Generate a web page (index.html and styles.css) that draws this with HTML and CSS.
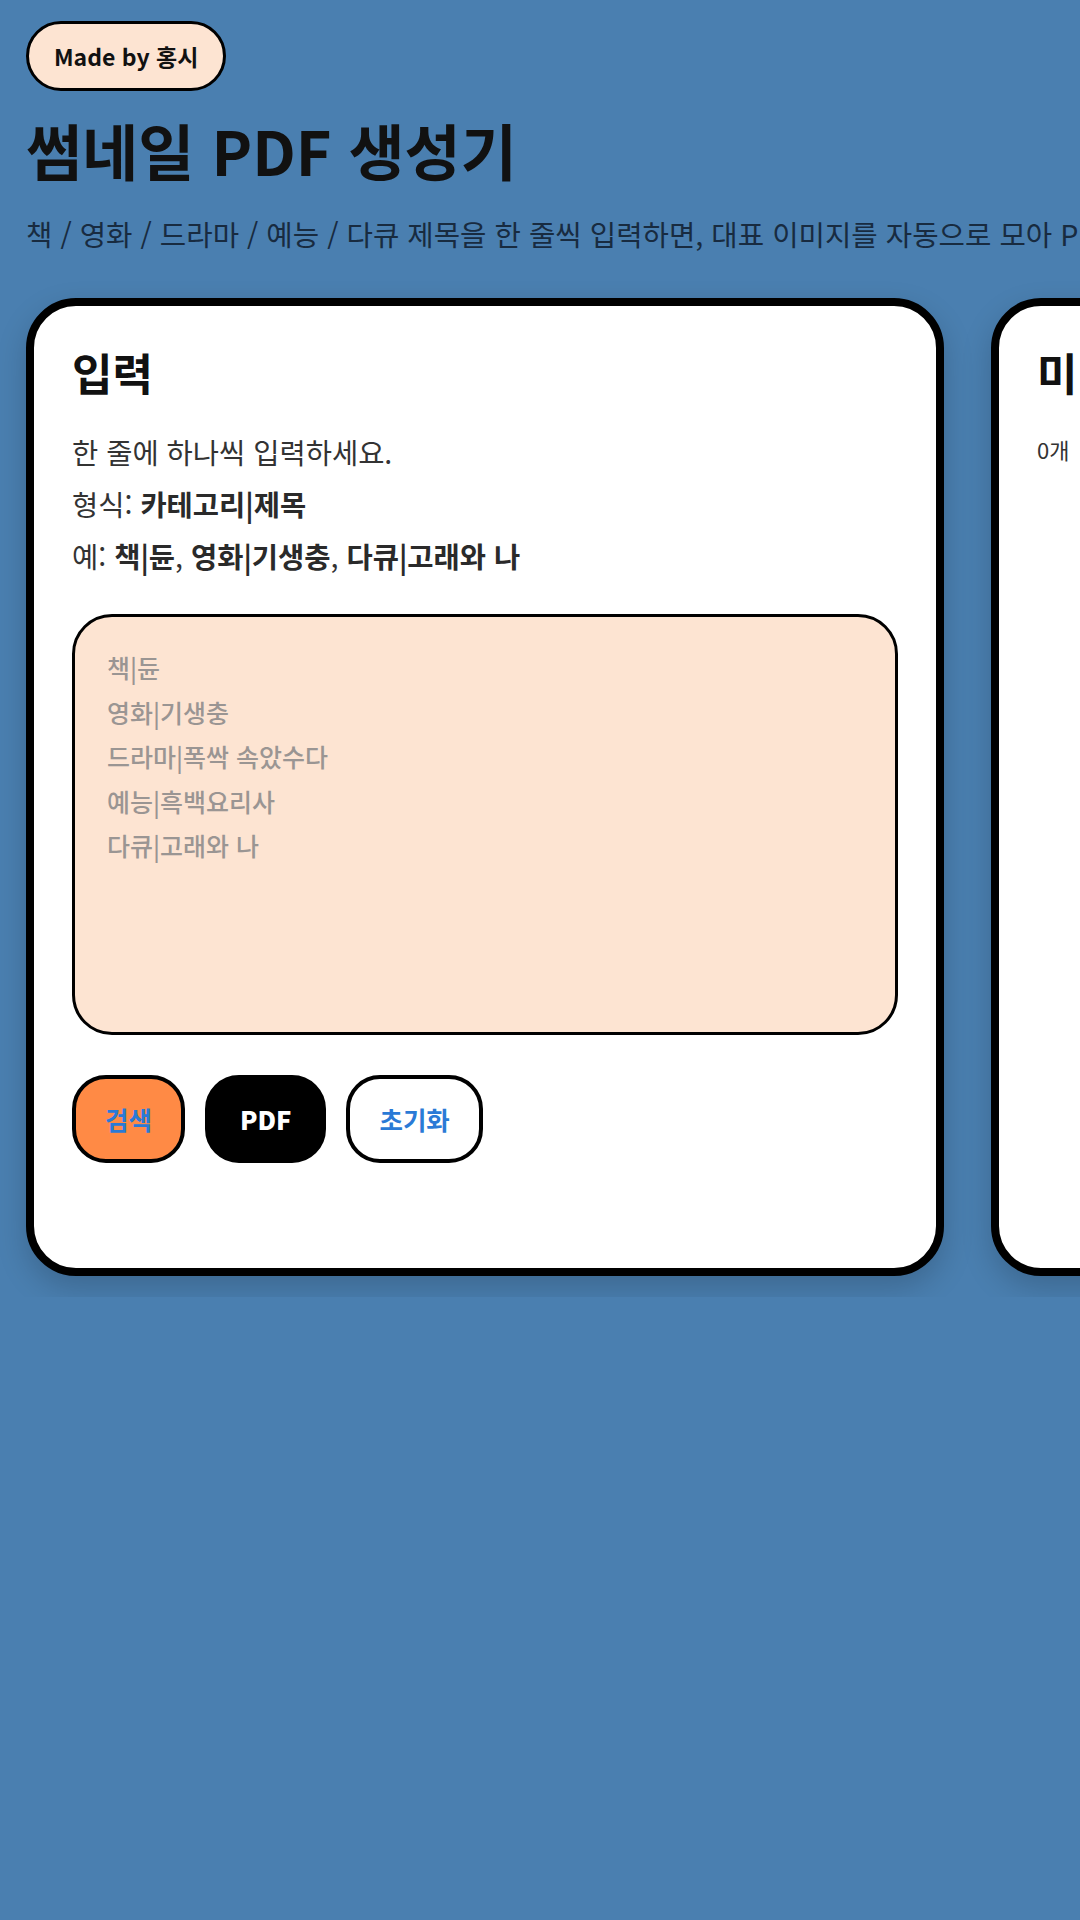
FILE: index.html
```html
<!DOCTYPE html>
<html lang="ko">
<head>
    <meta charset="UTF-8">
    <title>썸네일 PDF 생성기</title>
    <link rel="stylesheet" href="styles.css">
</head>
<body>
    <div class="page">
        <div class="made-by">Made by 홍시</div>

        <h1 class="title">썸네일 PDF 생성기</h1>
        <p class="subtitle">책 / 영화 / 드라마 / 예능 / 다큐 제목을 한 줄씩 입력하면, 대표 이미지를 자동으로 모아 PDF로 만들어 줍니다.</p>

        <div class="panels">
            <!-- 입력 -->
            <section class="panel">
                <h2 class="panel-title">입력</h2>
                <p class="hint">한 줄에 하나씩 입력하세요.</p>
                <p class="hint">형식: <b>카테고리|제목</b></p>
                <p class="hint">예: <b>책|듄</b>, <b>영화|기생충</b>, <b>다큐|고래와 나</b></p>

                <textarea class="title-input" placeholder="책|듄&#10;영화|기생충&#10;드라마|폭싹 속았수다&#10;예능|흑백요리사&#10;다큐|고래와 나"></textarea>

                <div class="actions">
                    <button class="btn search">검색</button>
                    <button class="btn pdf">PDF</button>
                    <button class="btn reset">초기화</button>
                </div>
            </section>

            <!-- 미리보기 -->
            <section class="panel">
                <h2 class="panel-title">미리보기</h2>
                <p class="count">0개</p>
            </section>
        </div>
    </div>
</body>
</html>
```

FILE: styles.css
```css
html, body {
    overflow: hidden;
}

body {
    margin: 0;
    background: #4a7fb0;
    color: #111;
    font-family: "Noto Sans CJK KR", "Noto Sans", sans-serif;
}

.page {
    padding: 21px 26px;
}

.made-by {
    display: inline-block;
    background: #fde4d2;
    border: 3px solid #000;
    border-radius: 40px;
    padding: 13px 25px;
    font-size: 23px;
    font-weight: bold;
    line-height: 38px;
}

.title {
    margin: 22px 0 0;
    font-size: 61px;
    font-weight: bold;
    line-height: 1.2;
}

.subtitle {
    margin: 27px 0 0;
    font-size: 28.7px;
    line-height: 42px;
    color: #182b40;
    white-space: nowrap;
}

.panels {
    display: flex;
    gap: 47px;
    margin-top: 43px;
}

.panel {
    flex: 0 0 918px;
    box-sizing: border-box;
    min-height: 978px;
    background: #fff;
    border: 8px solid #000;
    border-radius: 50px;
    padding: 40px 38px;
    box-shadow: 0 12px 30px rgba(0,0,0,0.18);
}

.panel-title {
    margin: 0 0 27px;
    font-size: 44px;
    font-weight: bold;
    line-height: 53px;
}

.hint {
    margin: 0;
    font-size: 28.5px;
    line-height: 52px;
    color: #333;
}

.hint b {
    color: #2a2a2a;
}

.count {
    margin: 34px 0 0;
    font-size: 22px;
    color: #333;
}

.title-input {
    display: block;
    box-sizing: border-box;
    width: 100%;
    height: 421px;
    margin-top: 32px;
    padding: 28px 32px;
    background: #fde4d2;
    border: 3px solid #000;
    border-radius: 40px;
    font-family: inherit;
    font-size: 25px;
    font-weight: 500;
    line-height: 44.5px;
    resize: none;
    outline: none;
}

.title-input::placeholder {
    color: #9a9593;
}

.actions {
    display: flex;
    gap: 20px;
    margin-top: 40px;
}

.btn {
    border: 4px solid #000;
    border-radius: 34px;
    padding: 25px 29px;
    font-family: inherit;
    font-size: 25.5px;
    font-weight: bold;
    line-height: 30px;
    color: #2a7ad6;
    background: #fff;
    cursor: pointer;
}

.btn.search {
    background: #ff8a45;
}

.btn.pdf {
    background: #000;
    color: #fff;
    font-weight: 900;
    padding: 25px 31px;
}
```
